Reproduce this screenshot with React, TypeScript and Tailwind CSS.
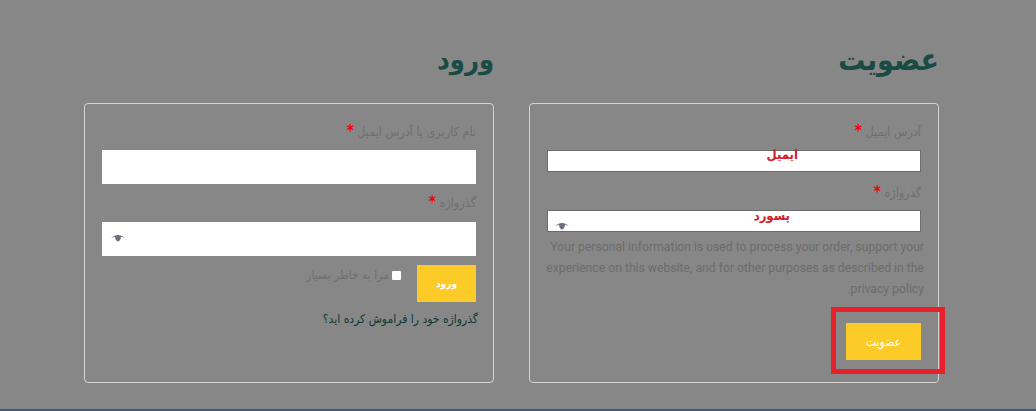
const fa = '"DejaVu Sans Condensed", "DejaVu Sans", "Noto Sans", sans-serif';

function Eye() {
  return (
    <svg width="14" height="7" viewBox="0 0 14 7" className="block">
      <path d="M0 3C2.6 1 4.8 0 7 0s4.4 1 7 3C12.4 2.4 11.2 2 10 1.8 9.8 4.4 8.6 6.4 7 6.4S4.2 4.4 4 1.8C2.8 2 1.6 2.4 0 3Z" fill="#6a7078" />
    </svg>
  );
}

function Label({ text }: { text: string }) {
  return (
    <div className="text-[12.5px] leading-[18px] text-[#6f6f6f]">
      {text} <span className="text-[#f00000] font-bold text-[15px] leading-[10px]">*</span>
    </div>
  );
}

function Field({ tall, eye, hint, hintClass }: { tall?: boolean; eye?: string; hint?: string; hintClass?: string }) {
  return (
    <div className={`relative w-[374px] ${tall ? "h-[34px] bg-white" : "h-[22px] bg-white border border-[#6b6b6b]"}`}>
      {hint && <span className={`absolute text-[13px] leading-[14px] font-bold text-[#d3202a] ${hintClass}`}>{hint}</span>}
      {eye && <span className={`absolute ${eye}`}><Eye /></span>}
    </div>
  );
}

export default function App() {
  return (
    <div dir="rtl" className="relative w-[1036px] h-[411px] overflow-hidden bg-[#878787] pl-[84px] pr-[97px] pt-[41px]" style={{ fontFamily: fa }}>
      <div className="flex gap-[35px]">
        {/* Register */}
        <section className="w-[410px]">
          <h2 className="text-[30px] leading-[38px] font-bold text-[#1a4a44] h-[62px]">عضویت</h2>
          <div className="h-[280px] border border-[#d4d4d4] rounded-[4px] pt-[19px] pr-[17px] pl-[17px]">
            <Label text="آدرس ایمیل" />
            <div className="mt-[9px]">
              <Field hint="ایمیل" hintClass="right-[122px] -top-[3px]" />
            </div>
            <div className="mt-[12px]"><Label text="گذرواژه" /></div>
            <div className="mt-[8px]">
              <Field hint="پسورد" hintClass="right-[130px] -top-[2px]" eye="left-[7px] top-[12px]" />
            </div>
            <p dir="rtl" className="mt-[5px] -ml-[2px] -mr-[3px] text-[12.2px] leading-[21px] text-[#6c6c6c]" style={{ fontFamily: 'Roboto, sans-serif' }}>
              Your personal information is used to process your order, support your experience on this website, and for other purposes as described in the privacy policy.
            </p>
            <div className="mt-[23px]">
              <button className="w-[75px] h-[37px] bg-[#fdcb27] text-white text-[12px]">عضویت</button>
            </div>
          </div>
        </section>

        {/* Login */}
        <section className="w-[410px]">
          <h2 className="text-[27px] leading-[38px] font-bold text-[#1a4a44] h-[62px]">ورود</h2>
          <div className="h-[280px] border border-[#d4d4d4] rounded-[4px] pt-[19px] pr-[17px] pl-[17px]">
            <Label text="نام کاربری یا آدرس ایمیل" />
            <div className="mt-[9px]"><Field tall /></div>
            <div className="mt-[10px]"><Label text="گذرواژه" /></div>
            <div className="mt-[10px]"><Field tall eye="left-[9px] top-[13px]" /></div>
            <div className="mt-[9px] flex items-start">
              <button className="w-[59px] h-[37px] bg-[#fdcb27] text-white text-[10px] font-bold">ورود</button>
              <label className="mr-[16px] mt-[2px] flex items-center gap-[3px] text-[12px] leading-[16px] text-[#6f6f6f]">
                <input type="checkbox" className="w-[9px] h-[9px] appearance-none bg-white rounded-[1px]" />
                <span>مرا به خاطر بسپار</span>
              </label>
            </div>
            <a className="block mt-[8px] -mr-[2px] text-[12px] leading-[18px] text-[#0f3833]">گذرواژه خود را فراموش کرده اید؟</a>
          </div>
        </section>
      </div>

      {/* annotation */}
      <div className="absolute left-[831px] top-[307px] w-[114px] h-[67px] border-[5px] border-[#e8202a]" />
      <div className="absolute left-0 right-0 bottom-0 h-[2px] bg-[#3a5a80]" />
    </div>
  );
}
